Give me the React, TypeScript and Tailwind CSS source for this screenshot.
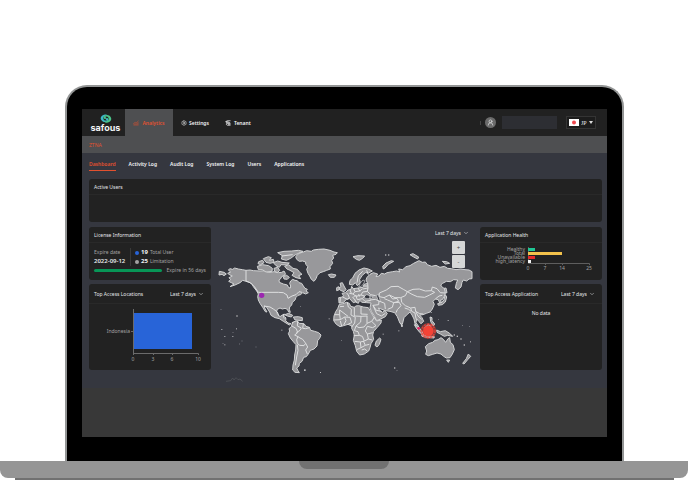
import React from "react";
import { ChartNoAxesCombined, ChevronDown, Settings, UserRound } from "lucide-react";

const tabs = ["Dashboard", "Activity Log", "Audit Log", "System Log", "Users", "Applications"];

const land = [
  // North America
  "M55 150L60 146L68 148L74 144L85 147L97 149L108 151L120 150L130 152L150 153L165 152L172 156L180 157L192 155L205 158L215 157L222 153L226 160L225 165L215 170L212 176L207 180L208 187L220 192L232 195L236 203L241 204L242 198L239 190L242 183L248 178L255 181L262 182L267 188L275 190L280 198L285 205L292 208L288 213L295 218L287 222L278 218L272 224L264 226L258 232L255 240L247 247L245 255L239 261L238 268L241 277L236 276L232 268L225 265L217 267L210 264L202 268L200 274L203 284L210 290L217 285L223 282L220 293L228 295L227 302L234 309L243 311L238 315L228 309L220 304L208 296L195 293L183 286L179 276L170 262L163 258L164 264L171 276L166 275L158 262L150 250L145 240L143 230L145 222L140 213L130 200L126 192L118 187L108 184L98 181L90 188L75 195L60 200L72 192L64 188L56 184L62 179L57 173L67 168L60 165L53 160L62 156Z",
  "M28 154L42 157L49 162L42 167L36 163L27 165Z",
  // Arctic islands
  "M146 125L158 121L162 128L152 134L144 131Z",
  "M160 116L175 110L184 113L178 121L190 118L192 127L180 130L168 127Z",
  "M142 139L158 134L176 137L187 145L186 154L168 156L157 149L145 149Z",
  "M203 98L222 94L245 93L265 91L279 94L265 100L255 105L242 115L229 121L214 117L217 107Z",
  "M190 128L203 123L216 127L238 129L229 135L213 134L208 142L198 137Z",
  "M192 145L203 142L209 151L202 158L194 154Z",
  "M224 139L236 134L249 145L262 148L270 158L276 163L266 167L272 176L258 173L246 166L252 158L240 151L231 147Z",
  "M220 170L230 166L238 172L232 178L222 177Z",
  // Greenland
  "M257 110L267 100L280 96L290 92L304 94L310 90L325 88L342 87L360 91L372 96L382 98L378 103L368 106L371 114L365 121L368 130L360 140L361 147L350 151L340 155L330 158L322 166L318 176L312 184L304 178L299 168L294 160L290 148L294 140L287 133L287 126L278 123L268 124L260 118Z",
  "M355 164L365 162L378 165L373 172L361 172Z",
  // Caribbean
  "M224 284L236 280L248 286L244 291L232 288Z",
  "M250 291L265 290L277 293L277 302L255 300Z",
  // South America
  "M246 312L252 305L262 303L268 310L282 311L288 319L298 322L302 331L314 334L326 338L333 345L329 355L323 362L321 378L312 387L301 391L295 402L289 410L281 412L276 424L268 430L267 438L260 444L264 452L268 458L255 457L248 450L249 435L253 420L254 405L257 390L258 374L250 365L241 354L235 341L239 333L237 326L244 320Z",
  // Africa
  "M388 253L398 251L410 247L418 250L422 259L433 262L437 258L446 257L460 261L475 263L482 275L491 291L500 303L514 300L513 309L502 322L491 334L488 345L491 358L483 371L480 383L476 393L463 402L449 405L440 394L436 377L430 361L433 346L430 334L425 325L426 318L414 313L401 317L390 320L379 313L371 302L372 288L377 275L383 266Z",
  "M499 363L509 354L513 358L508 373L501 381L495 376Z",
  // Europe and Asia
  "M387 249L386 233L398 231L400 226L396 220L406 218L414 210L423 208L425 199L430 206L444 204L459 202L462 193L473 190L468 180L471 172L480 163L490 158L503 162L498 170L507 168L514 160L524 162L531 158L548 155L560 153L569 156L566 147L578 149L588 140L600 137L611 130L627 122L637 127L646 126L652 134L665 139L678 136L690 142L703 139L713 145L724 146L738 149L752 147L765 149L777 150L786 155L786 176L777 177L770 183L760 180L756 187L753 201L744 209L736 204L739 190L743 180L731 179L721 185L709 184L698 190L692 195L698 203L706 206L707 216L703 229L697 239L691 241L696 250L689 249L685 239L676 237L669 244L673 253L667 267L660 276L649 280L639 284L629 285L636 293L641 304L633 311L626 304L620 296L618 308L625 318L630 331L622 325L615 311L612 297L606 285L600 276L592 283L582 293L577 313L570 310L562 290L554 278L540 274L525 272L516 268L505 264L509 271L517 277L524 273L532 280L526 290L510 298L500 302L494 290L484 274L480 263L483 249L470 248L456 247L449 241L445 250L437 246L434 237L428 232L439 245L430 248L419 236L409 238L400 248Z",
  "M418 193L420 181L428 174L435 160L447 150L462 144L475 147L487 153L475 159L466 158L457 166L449 178L451 189L442 197L436 188L428 195Z",
  "M391 211L386 204L393 200L390 190L397 188L402 198L408 209L402 215Z",
  "M380 203L386 200L388 209L380 212Z",
  // Arctic Russia and Svalbard
  "M429 110L444 107L464 108L458 115L448 121L439 118Z",
  "M520 147L518 139L528 129L544 122L551 124L535 133L525 144Z",
  "M600 104L609 101L626 111L623 117L611 111Z",
  "M697 124L710 125L719 130L706 132Z",
  // Japan, Philippines, Taiwan
  "M706 224L710 231L706 246L697 254L685 256L683 251L696 247L702 239Z",
  "M703 205L708 204L711 218L706 219Z",
  "M660 291L666 293L666 302L674 312L670 318L662 305Z",
  // Indonesia and New Guinea
  "M613 314L625 320L636 334L641 345L630 338L618 323Z",
  "M635 344L651 347L673 350L672 354L650 352L636 349Z",
  "M642 325L655 313L663 319L659 333L648 337Z",
  "M680 330L691 335L706 332L719 340L728 349L713 346L703 349L691 342L681 337Z",
  // Australia and New Zealand
  "M646 380L656 371L668 367L675 361L684 359L693 353L700 358L707 367L714 356L719 353L721 367L729 374L733 389L727 402L720 413L709 414L701 409L693 402L681 399L668 403L655 407L647 403L650 393Z",
  "M710 420L719 420L715 427Z",
  "M775 402L782 409L774 418L762 432L758 430L769 416Z",
  "M573 313L577 315L576 321Z",
];

// Black, Caspian and Baltic seas
const seas = [
  "M463 229L470 224L480 227L490 231L482 236L466 236Z",
  "M499 226L506 224L508 233L511 243L505 243L502 234Z",
  "M451 189L459 180L465 183L460 192L453 200L446 201Z",
];

const borders = [
  "M108 151V183L122 189L134 201L145 217",
  "M145 217H205L220 218L231 225L234 235L246 228L258 224L267 215L276 217",
  "M162 258L180 261L190 267L202 276L207 288",
  "M246 318L259 326L263 338L254 345L264 350L270 354L278 358L287 370L293 381L287 390L292 402",
  "M263 303L262 318L274 324L270 331L259 338M280 312L278 325L287 326L299 323M264 350L260 359L262 370L269 376L282 377L287 370M262 374L264 391L260 411L256 436",
  "M412 247L415 261L424 268L423 285L436 292M433 262V288L453 289L472 288M453 260V282L473 283M390 260L402 259M375 284L389 284L389 270L414 289M389 284L391 299L372 300M391 299L404 291L420 292M404 291L408 302L401 315M391 303L395 318M420 292L425 308L415 312M436 292L434 309L425 321M453 289L452 306L438 318L447 323L462 321L471 310L471 288M471 310L485 304L494 291M485 304L498 317L488 323L472 319M438 318L433 332L444 335L448 346L431 347M448 346L457 349L463 363L451 366L434 364M463 363L475 357L472 342L488 338M472 319L466 333L472 342M451 366L453 383L440 389M453 383L466 376L478 373M466 376L460 363M455 390L464 387L472 393M475 357L487 360",
  "M398 231L412 238L418 234L415 225L410 219M418 220L429 222L435 215L431 206M435 215L449 213L457 207M429 222L438 229L453 225L458 216L472 214L482 224L497 227M438 229L442 239L457 236L464 228L453 225M457 236L465 244L482 241M473 190L474 204L472 214M458 207L474 204M420 210L424 220M444 204L450 214M480 226L480 237M475 164L470 151M441 188L445 167L458 154M391 233L390 248M430 232L436 226L442 230M446 222L448 230M462 198L473 198",
  "M480 240L496 238L507 243L506 254L489 256M507 243L524 250L526 267M489 256L499 271L515 274M489 256L500 281L514 288L526 280M507 230L508 219L529 210L543 200L564 199L580 208L592 215L586 227L572 233L555 233L538 225L522 233L508 230M538 225L548 237L561 235L566 244L551 248L533 240L523 236M551 248L547 262L533 268M551 248L568 247L573 257L562 269L558 278M592 215L609 208L628 207L646 213L664 212L674 217L659 225L644 232L622 230L606 223L592 215M664 212L667 201L681 206L691 218L705 219M573 233L575 247L586 257L602 264L615 262L617 274L629 281L640 282M602 264L605 274L615 279L618 296M617 274L624 288L635 298M676 237L687 228L697 226M603 274L596 268L584 264",
  "M245 309L251 305M222 282L219 287L228 294M215 108L248 104",
];

const specks = [
  [32, 267, 2], [79, 286, 4], [34, 327, 3], [78, 325, 3], [68, 337, 2], [43, 348, 3], [67, 348, 3],
  [38, 370, 2], [43, 373, 3], [87, 371, 2], [95, 362, 2], [137, 380, 2], [214, 329, 3], [270, 258, 2],
  [282, 448, 5], [330, 456, 3], [356, 295, 3], [394, 361, 2], [476, 348, 2], [518, 341, 3], [552, 442, 4],
  [560, 451, 2], [565, 331, 3], [662, 276, 3], [685, 297, 2], [713, 300, 3], [731, 343, 4], [740, 347, 4],
  [751, 355, 4], [761, 373, 4], [780, 364, 3], [756, 316, 2], [778, 319, 2], [525, 103, 4], [534, 103, 4],
];

const Logo = () => (
  <div className="flex h-full w-[43px] flex-col items-center pl-1 pt-[5px]">
    <svg viewBox="0 0 32 24" className="h-[9px] w-3 shrink-0">
      <path d="M14 1C4 2 0 9 3 15C7 22 16 23 21 18C24 14 21 9 17 11C14 13 16 17 19 16C14 20 8 16 9 10C10 5 16 3 21 5C19 2 17 1 14 1Z" fill="#3bb9c7" />
      <path d="M18 23C28 22 32 15 29 9C25 2 16 1 11 6C8 10 11 15 15 13C18 11 16 7 13 8C18 4 24 8 23 14C22 19 16 21 11 19C13 22 15 23 18 23Z" fill="#4bc58a" />
    </svg>
    <span className="font-['Inter'] text-[9px] leading-[10px] font-bold text-gray-100">safous</span>
  </div>
);

const RangeSelect = ({ label }: { label: string }) => (
  <label className="flex items-center gap-[2px] text-gray-200">
    <select aria-label={label} className="appearance-none bg-transparent text-[5px] leading-2">
      <option>Last 7 days</option>
    </select>
    <ChevronDown className="size-[6px]" />
  </label>
);

type CardProps = {
  title: string;
  className?: string;
  range?: boolean;
  children?: React.ReactNode;
};

const Card = ({ title, className = "", range, children }: CardProps) => (
  <section className={`overflow-hidden rounded-[3px] bg-[#222222] ${className}`}>
    <div className={`flex items-center justify-between border-b border-[#292929] pr-[7px] pl-[5px] ${range ? "h-5" : "h-4"}`}>
      <h2 className="text-gray-200">{title}</h2>
      {range && <RangeSelect label={title} />}
    </div>
    {children}
  </section>
);

const WorldMap = () => (
  <svg viewBox="3 21 807 483" className="w-full" role="img" aria-label="Access locations">
    <g fill="#98989b" stroke="#d2d3d4" strokeWidth="3" strokeLinejoin="round">
      {land.map((d) => (
        <path key={d} d={d} />
      ))}
    </g>
    <g fill="#35373f" stroke="#d2d3d4" strokeWidth="2">
      {seas.map((d) => (
        <path key={d} d={d} />
      ))}
    </g>
    <g fill="none" stroke="#dedfe0" strokeWidth="3" strokeLinejoin="round">
      {borders.map((d) => (
        <path key={d} d={d} />
      ))}
    </g>
    <g fill="#b9babd">
      {specks.map(([x, y, s]) => (
        <rect key={`${x}-${y}`} x={x} y={y} width={s} height={s} />
      ))}
    </g>
    <path d="M48 484L62 482L68 474L72 480L78 473L84 479L90 477L98 484" fill="none" stroke="#55575c" strokeWidth="2" />
    <circle cx="155" cy="226" r="8" fill="#9c27b0" />
    <circle cx="626" cy="325" r="4" fill="#e91e63" />
    <circle cx="655" cy="333" r="24" fill="#f44336" opacity="0.4" />
    <circle cx="655" cy="333" r="20" fill="none" stroke="#f44336" strokeWidth="5" strokeDasharray="6 4" opacity="0.7" />
    <circle cx="655" cy="333" r="16" fill="#f44336" />
  </svg>
);

const LocationsChart = () => (
  <svg viewBox="0 0 122 66" className="w-full" fontSize="5" fill="#a3a3a3">
    <path d="M44.5 5V49.5H109.5V51M44.5 49V51M64.5 49V51M83.5 49V51M42 27.5H44" fill="none" stroke="#6b6b6b" strokeWidth="1" />
    <rect x="45" y="9" width="58" height="36" fill="#2864d8" />
    <text x="41" y="29" textAnchor="end">Indonesia</text>
    <g textAnchor="middle">
      <text x="44" y="57">0</text>
      <text x="64" y="57">3</text>
      <text x="83" y="57">6</text>
      <text x="109" y="57">10</text>
    </g>
  </svg>
);

const health = [
  { label: "Healthy", width: 7, color: "#1fc795" },
  { label: "Total", width: 34, color: "#f2c14b" },
  { label: "Unavailable", width: 7, color: "#e52b2b" },
  { label: "high_latency", width: 3, color: "#f5f5f5" },
];

const HealthChart = () => (
  <svg viewBox="0 0 122 36" className="w-full" fontSize="5" fill="#a3a3a3">
    <path d="M48.5 4V20.5H109.5V22M65.5 20V22M82.5 20V22" fill="none" stroke="#5e5e5e" />
    {health.map((row, i) => (
      <g key={row.label}>
        <text x="45" y={8 + i * 4} textAnchor="end">{row.label}</text>
        <rect x="48" y={5 + i * 4} width={row.width} height="3" fill={row.color} />
      </g>
    ))}
    <g textAnchor="middle">
      <text x="48" y="27">0</text>
      <text x="65" y="27">7</text>
      <text x="82" y="27">14</text>
      <text x="109" y="27">25</text>
    </g>
  </svg>
);

const Header = () => (
  <header className="flex h-[27px] items-center bg-[#212121] font-semibold">
    <Logo />
    <nav className="flex h-full items-center">
      <a href="#analytics" className="flex h-full w-12 items-center justify-center gap-[3px] bg-[#4e4f51] text-[#e2512f]">
        <ChartNoAxesCombined className="size-[6px]" />
        Analytics
      </a>
      <a href="#settings" className="flex items-center gap-[2px] pl-2 text-gray-100">
        <Settings className="size-[6px]" />
        Settings
      </a>
      <a href="#tenant" className="flex items-center gap-[3px] pl-4 text-gray-100">
        <svg viewBox="0 0 24 24" className="size-[6px]" fill="none" stroke="currentColor" strokeWidth="3">
          <path d="M22 3H9C3 3 3 11 9 11H20M2 7H14M22 13H8M6 13C4 21 9 21 12 21H22M12 17H22" />
        </svg>
        Tenant
      </a>
    </nav>
    <div className="ml-auto flex items-center pr-[11px]">
      <span className="mr-1 h-1 w-px bg-[#444444]" />
      <button type="button" aria-label="Account" className="mr-[6px] flex size-[11px] items-center justify-center rounded-full bg-[#6b6b6b] text-gray-100">
        <UserRound className="size-[7px]" />
      </button>
      <div className="mr-[9px] h-[13px] w-[55px] bg-[#2d2e33]" />
      <label className="flex h-[13px] w-[30px] items-center border border-[#343434] bg-[#1c1c1c] pl-[2px] text-gray-200">
        <svg viewBox="0 0 10 7" className="mr-[2px] h-[7px] w-[10px] shrink-0">
          <rect width="10" height="7" fill="#ffffff" />
          <circle cx="5" cy="3.5" r="2" fill="#f0484e" />
        </svg>
        <select aria-label="Language" className="appearance-none bg-transparent font-['Liberation_Serif',serif] text-[6px] leading-2 font-normal">
          <option>JP</option>
        </select>
        <svg viewBox="0 0 4 3" className="ml-[2px] h-[3px] w-1">
          <path d="M0 0H4L2 3Z" fill="#dddddd" />
        </svg>
      </label>
    </div>
  </header>
);

const Dashboard = () => (
  <main className="bg-[#35373f] pr-[5px] pl-[7px]">
    <nav className="flex gap-[13px] pb-2 pt-[7px] font-semibold text-gray-100">
      {tabs.map((tab, i) => (
        <a
          key={tab}
          href={`#${tab}`}
          className={i === 0 ? "border-b border-[#e2512f] pb-[2px] text-[#e2512f]" : "pb-[2px]"}
        >
          {tab}
        </a>
      ))}
    </nav>
    <Card title="Active Users" className="mb-[5px] h-[43px]" />
    <div className="grid grid-cols-[122px_1fr_122px]">
      <div className="flex flex-col gap-1">
        <Card title="License Information" className="h-[53px]">
          <div className="flex px-[5px] pt-[5px] leading-[9px]">
            <div className="w-9 shrink-0">
              <p className="text-[#a3a3a3]">Expire date</p>
              <p className="text-[6px] leading-[9px] font-semibold text-gray-200">2022-09-12</p>
            </div>
            <ul className="border-l border-[#3a3a3a] pl-1 text-[#a3a3a3]">
              <li className="flex items-center gap-[2px]">
                <span className="size-1 rounded-full bg-[#2864d8]" />
                <b className="text-[6px] leading-[9px] text-gray-100">19</b> Total User
              </li>
              <li className="flex items-center gap-[2px]">
                <span className="size-1 rounded-full bg-[#a3a3a3]" />
                <b className="text-[6px] leading-[9px] text-gray-100">25</b> Limitation
              </li>
            </ul>
          </div>
          <div className="flex items-center justify-between px-[5px] whitespace-nowrap">
            <div className="h-[3px] w-[68px] shrink-0 rounded-full bg-[#089657]" />
            <span className="text-[#a3a3a3]">Expire in 56 days</span>
          </div>
        </Card>
        <Card title="Top Access Locations" range className="h-[86px]">
          <LocationsChart />
        </Card>
      </div>
      <div className="relative">
        <WorldMap />
        <div className="absolute top-[2px] right-[11px] flex flex-col items-end">
          <RangeSelect label="Map range" />
          <div className="mt-1 mr-1 flex flex-col gap-px text-[6px] text-[#444444]">
            <button type="button" className="size-[13px] rounded-[1px] bg-[#d5d6d6]">+</button>
            <button type="button" className="size-[13px] rounded-[1px] bg-[#d5d6d6]">-</button>
          </div>
        </div>
      </div>
      <div className="flex flex-col gap-1">
        <Card title="Application Health" className="h-[53px]">
          <HealthChart />
        </Card>
        <Card title="Top Access Application" range className="h-[86px]">
          <p className="pt-[5px] text-center text-gray-200">No data</p>
        </Card>
      </div>
    </div>
  </main>
);

export default function App() {
  return (
    <div className="flex min-h-screen flex-col justify-end bg-white font-['Noto_Sans',sans-serif] text-[5px] leading-2">
      <div className="mr-16 ml-[65px] rounded-t-[22px] border-2 border-b-0 border-[#939595] bg-black pt-[22px] pr-[15px] pb-6 pl-[15px]">
        <div className="bg-[#383838] pb-[49px]">
          <Header />
          <div className="flex h-[17px] items-center bg-[#4e4f51] px-[7px] text-[#e2512f]">ZTNA</div>
          <Dashboard />
        </div>
      </div>
      <div className="flex h-[17px] justify-center rounded-b-lg bg-[#959595]">
        <div className="h-2 w-[90px] rounded-b-lg bg-[#717171]" />
      </div>
      <div className="mr-[14px] ml-[15px] h-[2px] bg-[#717171]" />
    </div>
  );
}
